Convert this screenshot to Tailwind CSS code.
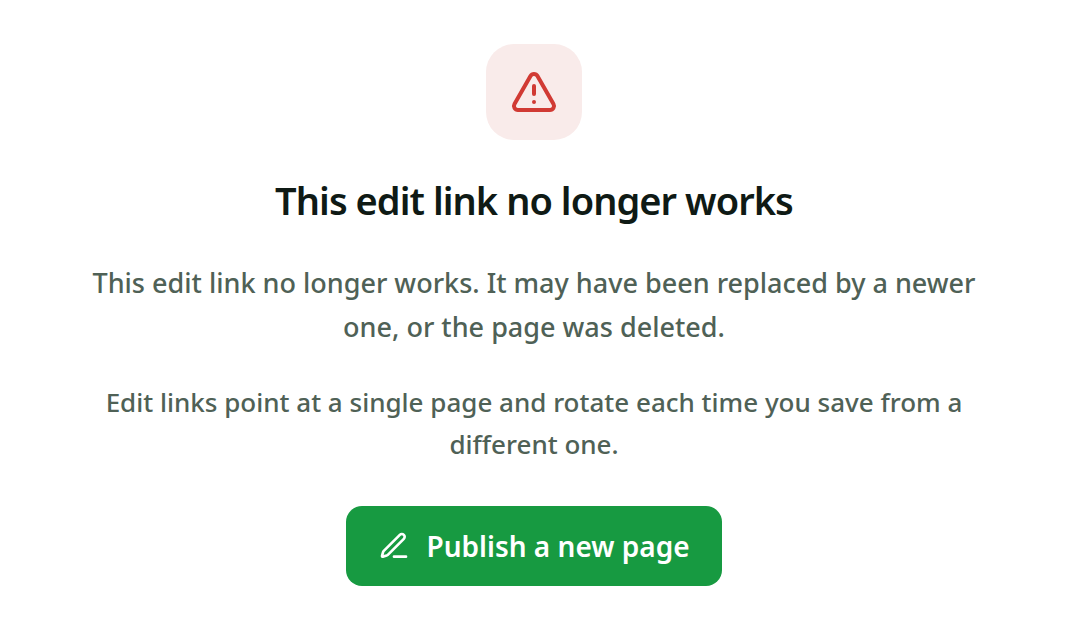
<!DOCTYPE html>
<html lang="en">
<head>
<meta charset="utf-8">
<meta name="viewport" content="width=device-width, initial-scale=1">
<title>This edit link no longer works</title>
<script src="https://cdn.jsdelivr.net/npm/@tailwindcss/browser@4"></script>
</head>
<body class="bg-white font-['Noto_Sans',sans-serif] antialiased">
<main class="mx-auto flex max-w-[960px] flex-col items-center px-8 pt-11 pb-9 text-center">
  <div class="flex size-24 items-center justify-center rounded-[28px] bg-[#f9ebea] text-[#d13a34]">
    <svg class="size-12" viewBox="0 0 24 24" fill="none" stroke="currentColor" stroke-width="2" stroke-linecap="round" stroke-linejoin="round" aria-hidden="true">
      <path d="m21.73 18-8-14a2 2 0 0 0-3.48 0l-8 14A2 2 0 0 0 4 21h16a2 2 0 0 0 1.73-3"/>
      <path d="M12 9v4"/><path d="M12 17h.01"/>
    </svg>
  </div>
  <h1 class="mt-9 text-[38px] leading-[48px] font-semibold tracking-tight text-[#0f1a15]">This edit link no longer works</h1>
  <p class="mt-[37px] text-[27px] leading-[44px] font-medium text-[#4f6156]">This edit link no longer works. It may have been replaced by a newer one, or the page was deleted.</p>
  <p class="mt-8 text-[26px] leading-[42px] font-medium text-[#4f6156]">Edit links point at a single page and rotate each time you save from a different one.</p>
  <a href="#" class="mt-[41px] flex h-20 items-center gap-4 rounded-2xl bg-[#179a41] px-8 text-[28px] font-semibold text-white">
    <svg class="size-8" viewBox="0 0 24 24" fill="none" stroke="currentColor" stroke-width="2" stroke-linecap="round" stroke-linejoin="round" aria-hidden="true">
      <path d="M12 20h9"/><path d="M16.376 3.622a1 1 0 0 1 3.002 3.002L7.368 18.635a2 2 0 0 1-.855.506l-2.872.838a.5.5 0 0 1-.62-.62l.838-2.872a2 2 0 0 1 .506-.854z"/>
    </svg>
    Publish a new page
  </a>
</main>
</body>
</html>
